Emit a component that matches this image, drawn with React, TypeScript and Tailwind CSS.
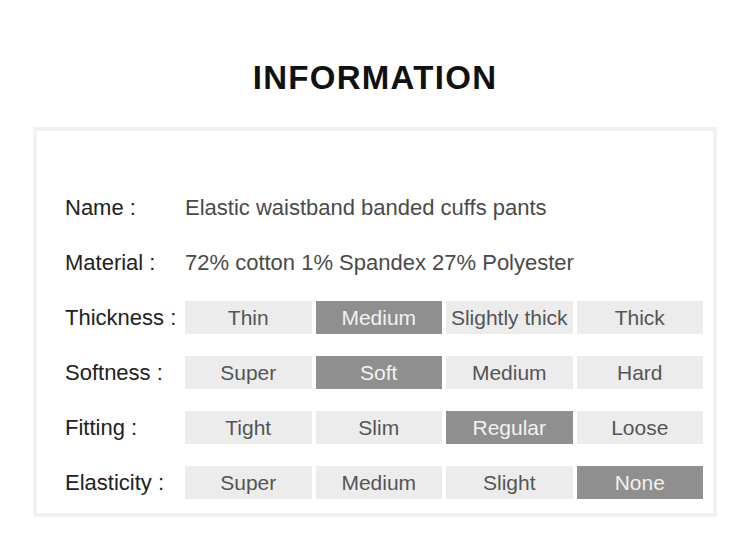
const rows: { label: string; options: string[]; active: number }[] = [
  { label: 'Thickness :', options: ['Thin', 'Medium', 'Slightly thick', 'Thick'], active: 1 },
  { label: 'Softness :', options: ['Super', 'Soft', 'Medium', 'Hard'], active: 1 },
  { label: 'Fitting :', options: ['Tight', 'Slim', 'Regular', 'Loose'], active: 2 },
  { label: 'Elasticity :', options: ['Super', 'Medium', 'Slight', 'None'], active: 3 },
];

function TextRow({ label, value }: { label: string; value: string }) {
  return (
    <div className="flex h-[33px] items-center">
      <span className="w-[120px] text-[22px] text-[#222]">{label}</span>
      <span className="text-[22px] text-[#4a4a4a]">{value}</span>
    </div>
  );
}

export default function App() {
  return (
    <div className="h-[547px] w-[750px] bg-white pt-[56px] font-['Liberation_Sans',Arial,sans-serif]">
      <h1 className="text-center text-[33px] font-bold leading-[44px] tracking-[1.3px] text-[#111]">
        INFORMATION
      </h1>
      <div className="mx-[33px] mt-[27px] h-[390px] border-4 border-[#f1f1f1] pl-[28px] pt-[60px]">
        <div className="flex flex-col gap-[22px]">
          <TextRow label="Name :" value="Elastic waistband banded cuffs pants" />
          <TextRow label="Material :" value="72% cotton 1% Spandex 27% Polyester" />
          {rows.map((row) => (
            <div key={row.label} className="flex h-[33px] items-center">
              <span className="w-[120px] text-[22px] text-[#222]">{row.label}</span>
              <div className="grid w-[518px] grid-cols-4 gap-[4px]">
                {row.options.map((opt, i) => (
                  <div
                    key={opt}
                    className={`flex h-[33px] items-center justify-center text-[21px] ${
                      i === row.active ? 'bg-[#8f8f8f] text-[#f2f2f2]' : 'bg-[#ececec] text-[#555]'
                    }`}
                  >
                    {opt}
                  </div>
                ))}
              </div>
            </div>
          ))}
        </div>
      </div>
    </div>
  );
}
